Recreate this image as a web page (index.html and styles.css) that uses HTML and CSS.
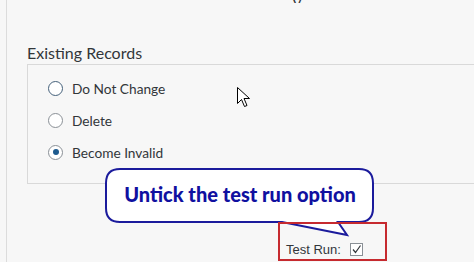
FILE: index.html
```html
<!DOCTYPE html>
<html lang="en">
<head>
    <meta charset="UTF-8">
    <title>Existing Records</title>
    <link rel="stylesheet" href="styles.css">
</head>
<body>
<div class="page">
    <!-- cut off title above the fold -->
    <div class="top-title">y</div>

    <div class="group-label">Existing Records</div>
    <div class="radio-box">
        <label class="radio-row">
            <span class="radio focused"></span>
            Do Not Change
        </label>
        <label class="radio-row">
            <span class="radio"></span>
            Delete
        </label>
        <label class="radio-row">
            <span class="radio checked"></span>
            Become Invalid
        </label>
    </div>

    <div class="footer">
        <span class="test-run">Test Run:</span>
        <span class="checkbox">
            <svg width="11" height="11" viewBox="0 0 11 11"><path d="M2 5.5 L4.5 8.5 L9.5 1.5" fill="none" stroke="#32363a" stroke-width="1.2"/></svg>
        </span>
    </div>
</div>

<!-- mouse pointer -->
<svg class="cursor" width="14" height="22" viewBox="0 0 14 22">
    <path d="M0.5 0.5 L0.5 16.5 L4.5 12.5 L7.5 19.5 L10 18.5 L7 11.5 L12.5 11.5 Z" fill="#fff" stroke="#000" stroke-width="1"/>
</svg>

<!-- callout annotation -->
<div class="callout">
    <svg class="callout-shape" width="270" height="72" viewBox="0 0 270 72">
        <path d="M15 1 H254 Q268 1 268 15 V40 Q268 54 254 54 H233 L242 67 L177 54 H15 Q1 54 1 40 V15 Q1 1 15 1 Z" fill="#fff" stroke="#1b1b9c" stroke-width="2"/>
    </svg>
    <span class="callout-text">Untick the test run option</span>
</div>
<div class="highlight"></div>
</body>
</html>
```

FILE: styles.css
```css
body {
    margin: 0;
    background: #f7f7f7;
    font-family: Lato, "Open Sans", sans-serif;
    color: #32363a;
    overflow: hidden;
}

.page {
    margin-left: 6px;
    border-left: 1px solid #dcdcdc;
    height: 262px;
    padding-left: 20px;
}

.top-title {
    height: 3px;
    overflow: hidden;
    font-size: 16px;
    line-height: 3px;
    padding-left: 266px;
    color: #32363a;
    margin-bottom: 41px;
}

.group-label {
    font-size: 16px;
    line-height: 18px;
    margin-bottom: 2px;
}

.radio-box {
    border: 1px solid #d9d9d9;
    border-right: none;
    padding: 7px 0 15px 20px;
}

.radio-row {
    display: flex;
    align-items: center;
    height: 32px;
    font-size: 13.7px;
    gap: 9px;
}

.radio {
    width: 13px;
    height: 13px;
    border: 1px solid #8a9096;
    border-radius: 50%;
    background: #fff;
    display: flex;
    align-items: center;
    justify-content: center;
}

.radio.focused {
    border-color: #44607a;
}

.radio.checked::after {
    content: "";
    width: 6px;
    height: 6px;
    border-radius: 50%;
    background: #1d5a8e;
}

.footer {
    display: flex;
    align-items: center;
    padding-left: 259px;
    margin-top: 58px;
    gap: 9px;
}

.test-run {
    font-family: "Liberation Sans", Arial, sans-serif;
    font-size: 13px;
}

.checkbox {
    width: 11px;
    height: 11px;
    border: 1px solid #8a9096;
    background: #fff;
    display: flex;
}

.cursor {
    position: absolute;
    left: 237px;
    top: 87px;
}

.callout {
    position: absolute;
    left: 105px;
    top: 168px;
    width: 270px;
    height: 56px;
}

.callout-shape {
    position: absolute;
    left: 0;
    top: 0;
}

.callout-text {
    position: relative;
    display: block;
    text-align: center;
    line-height: 52px;
    font-family: Lato, sans-serif;
    font-weight: 900;
    font-size: 20px;
    color: #1010a0;
}

.highlight {
    position: absolute;
    left: 278px;
    top: 222px;
    width: 105px;
    height: 35px;
    border: 2px solid #c62a2f;
}
```
